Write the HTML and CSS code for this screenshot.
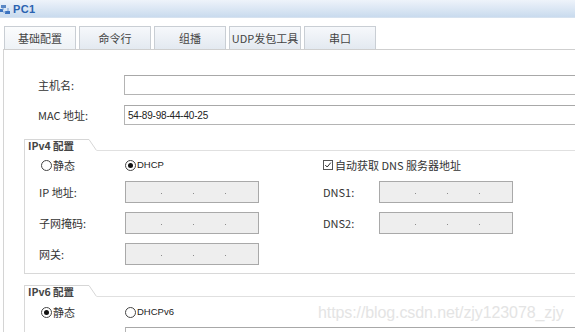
FILE: index.html
```html
<!DOCTYPE html>
<html lang="zh">
<head>
<meta charset="utf-8">
<title>PC1</title>
<link rel="stylesheet" href="styles.css">
</head>
<body>
<div class="window">
  <div class="titlebar">
    <svg class="ticon" width="11" height="12" viewBox="0 0 11 12">
      <rect x="1" y="1" width="5" height="3" fill="#5a87c4"/>
      <rect x="0" y="5" width="3" height="3" fill="#3b73c0"/>
      <rect x="5" y="7" width="5" height="3" fill="#3b73c0"/>
      <path d="M3 4 L3 6 M3 8 L6 8 M8 4 L8 7" stroke="#7aa0d4" stroke-width="1" fill="none"/>
    </svg>
    <span class="title">PC1</span>
  </div>
  <div class="tabs">
    <div class="tab active">基础配置</div>
    <div class="tab">命令行</div>
    <div class="tab">组播</div>
    <div class="tab">UDP发包工具</div>
    <div class="tab">串口</div>
  </div>
  <div class="panel">
    <div class="field-row">
      <span class="label">主机名:</span>
      <div class="text-input"></div>
    </div>
    <div class="field-row">
      <span class="label">MAC 地址:</span>
      <div class="text-input"><span class="value">54-89-98-44-40-25</span></div>
    </div>

    <div class="group v4">
      <div class="group-head">
        <span class="legend">IPv4 配置</span>
        <svg class="slant" width="8" height="12" viewBox="0 0 8 12"><path d="M0 0.5 L7.5 11.5" stroke="#d6d6d6" stroke-width="1" fill="none"/></svg>
        <span class="rule"></span>
      </div>
      <div class="group-body">
        <div class="choice-row">
          <label class="choice c1"><span class="radio"></span>静态</label>
          <label class="choice c2"><span class="radio on"></span><span class="latin">DHCP</span></label>
          <label class="choice c3"><span class="check"><svg width="10" height="10" viewBox="0 0 10 10"><path d="M1.5 5 L4 7.5 L8.5 2" stroke="#222" stroke-width="1.2" fill="none"/></svg></span>自动获取 DNS 服务器地址</label>
        </div>
        <div class="ip-grid">
          <span class="label">IP 地址:</span>
          <div class="ip-input"><i></i><i></i><i></i></div>
          <span></span>
          <span class="label">DNS1:</span>
          <div class="ip-input"><i></i><i></i><i></i></div>

          <span class="label">子网掩码:</span>
          <div class="ip-input"><i></i><i></i><i></i></div>
          <span></span>
          <span class="label">DNS2:</span>
          <div class="ip-input"><i></i><i></i><i></i></div>

          <span class="label">网关:</span>
          <div class="ip-input"><i></i><i></i><i></i></div>
        </div>
      </div>
    </div>

    <div class="group v6">
      <div class="group-head">
        <span class="legend">IPv6 配置</span>
        <svg class="slant" width="8" height="12" viewBox="0 0 8 12"><path d="M0 0.5 L7.5 11.5" stroke="#d6d6d6" stroke-width="1" fill="none"/></svg>
        <span class="rule"></span>
      </div>
      <div class="group-body">
        <div class="choice-row">
          <label class="choice c1"><span class="radio on"></span>静态</label>
          <label class="choice c2"><span class="radio"></span><span class="latin">DHCPv6</span></label>
        </div>
        <div class="field-row v6row">
          <span class="label">IPv6 地址:</span>
          <div class="text-input"></div>
        </div>
      </div>
    </div>
  </div>
  <div class="watermark">https://blog.csdn.net/zjy123078_zjy</div>
</div>
</body>
</html>
```

FILE: styles.css
```css
* { box-sizing: border-box; }
html, body { margin: 0; padding: 0; background: #fff; }
body {
  width: 575px;
  height: 332px;
  overflow: hidden;
  font-family: "Noto Sans CJK SC", "Liberation Sans", sans-serif;
  font-size: 11px;
  color: #333;
}
.window { position: relative; width: 575px; height: 332px; overflow: hidden; }

.titlebar {
  height: 18px;
  display: flex;
  align-items: center;
  gap: 2px;
  background: linear-gradient(#eef3fa, #c9dbee);
  border-bottom: 1px solid #d6e2ef;
}
.ticon { margin-left: 0; margin-top: 2px; }
.title {
  font-family: "Liberation Sans", sans-serif;
  font-weight: bold;
  font-size: 11px;
  color: #2a62b0;
  letter-spacing: 0.3px;
}

.tabs {
  display: flex;
  gap: 3px;
  padding-left: 4px;
  margin-top: 8px;
  height: 23px;
}
.tab {
  width: 72px;
  height: 23px;
  border: 1px solid #c9ced4;
  border-bottom: none;
  background: linear-gradient(#f6f8fb, #e3e9f0);
  display: flex;
  align-items: center;
  justify-content: center;
  font-size: 11px;
  color: #444;
  line-height: 1;
}
.tab.active { background: linear-gradient(#fbfcfd, #eef2f6); }

.panel {
  margin-left: 3px;
  border-left: 1px solid #d4d4d4;
  border-top: 1px solid #cfcfcf;
  padding: 25px 0 0 20px;
  height: 300px;
}

.field-row {
  display: flex;
  align-items: center;
  padding-left: 14px;
  height: 20px;
  margin-bottom: 10px;
}
.label { width: 86px; flex: none; color: #333; font-size: 11px; line-height: 1; }
.text-input {
  width: 470px;
  flex: none;
  height: 20px;
  border: 1px solid #b4b4b4;
  border-top-color: #a8a8a8;
  background: #fff;
  display: flex;
  align-items: center;
  padding-left: 3px;
}
.value { font-family: "Liberation Sans", sans-serif; font-size: 10px; color: #222; letter-spacing: -0.2px; }

.group {
  border-left: 1px solid #d8d8d8;
  border-bottom: 1px solid #d8d8d8;
  width: 560px;
}
.group.v4 { margin-top: 14px; }
.group.v6 { margin-top: 11px; border-bottom: none; }
.group-head { display: flex; height: 12px; align-items: stretch; }
.legend {
  border-top: 1px solid #d6d6d6;
  width: 64px;
  padding-left: 3px;
  font-family: "Noto Sans CJK SC", sans-serif;
  font-size: 10.5px;
  font-weight: bold;
  color: #444;
  line-height: 12px;
  white-space: nowrap;
}
.slant { flex: none; display: block; }
.rule { flex: 1; border-bottom: 1px solid #e0e0e0; }

.group-body { padding: 8px 0 8px 14px; }
.v6 .group-body { padding-top: 9px; }

.choice-row { display: flex; height: 12px; align-items: center; margin-bottom: 10px; }
.v6 .choice-row { margin-bottom: 9px; }
.choice { display: flex; align-items: center; gap: 1px; font-size: 11px; color: #333; line-height: 1; }
.choice.c1 { width: 86px; padding-left: 2px; }
.choice.c2 { width: 198px; }
.latin { font-family: "Liberation Sans", sans-serif; font-size: 9.5px; color: #222; }
.radio {
  width: 11px; height: 11px;
  border: 1px solid #444;
  border-radius: 50%;
  background: #fff;
  display: flex; align-items: center; justify-content: center;
  flex: none;
}
.radio.on::after {
  content: "";
  width: 5px; height: 5px;
  border-radius: 50%;
  background: #111;
}
.check {
  width: 10px; height: 10px;
  border: 1px solid #555;
  background: #fff;
  display: flex; align-items: center; justify-content: center;
  margin-right: 1px;
}
.check svg { display: block; }

.ip-grid {
  display: grid;
  grid-template-columns: 86px 134px 64px 56px 134px;
  grid-auto-rows: 22px;
  row-gap: 9px;
  align-items: center;
}
.ip-input {
  height: 22px;
  border: 1px solid #a9a9a9;
  background: #eeeeee;
  display: flex;
  align-items: center;
  padding-left: 35px;
  gap: 31px;
}
.ip-input i {
  display: block;
  width: 1px; height: 1px;
  background: #8c8c8c;
  margin-top: 3px;
}

.v6row { padding-left: 0; margin-bottom: 0; }

.watermark {
  position: absolute;
  left: 318px;
  top: 304px;
  font-family: "Liberation Sans", sans-serif;
  font-size: 16px;
  color: #e4e4e4;
  white-space: nowrap;
  letter-spacing: -0.1px;
}
```
